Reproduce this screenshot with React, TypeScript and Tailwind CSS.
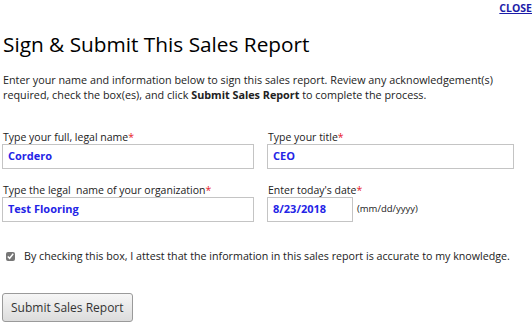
import React, { useState } from 'react'

// Sign & submit dialog body, sized for a 532x322 frame.

function Label({ text }: { text: string }) {
  return (
    <label className="block whitespace-pre text-[10.5px] leading-[13px] text-[#222] pl-[1px]">
      {text}
      <span className="text-[#e8202a]">*</span>
    </label>
  )
}

function Field({ value, width }: { value: string; width: string }) {
  return (
    <div
      className={`${width} h-[25px] border border-[#c4c4c4] bg-white flex items-center px-[5px] text-[11px] font-bold text-[#2424e6]`}
    >
      {value}
    </div>
  )
}

export default function App() {
  const [checked, setChecked] = useState(true)

  return (
    <div className="w-[532px] h-[322px] overflow-hidden bg-white font-['Open_Sans',sans-serif] text-[#222]">
      <div className="flex justify-end pt-[2px]">
        <a href="#" className="text-[10.5px] leading-[13px] font-bold text-[#1c1ca8] underline">
          CLOSE
        </a>
      </div>

      <h1 className="mt-[16px] pl-[3px] text-[20.8px] leading-[27px] font-normal text-black">
        Sign &amp; Submit This Sales Report
      </h1>

      <p className="mt-[14px] pl-[3px] text-[10.8px] leading-[15px] text-[#222] pr-[20px]">
        Enter your name and information below to sign this sales report. Review any acknowledgement(s)
        required, check the box(es), and click <span className="font-bold">Submit Sales Report</span> to complete the process.
      </p>

      <div className="mt-[29px] pl-[2px] grid grid-cols-[252px_247px] gap-x-[13px] gap-y-[15px]">
        <div className="flex flex-col">
          <Label text="Type your full, legal name" />
          <Field value="Cordero" width="w-[252px]" />
        </div>
        <div className="flex flex-col">
          <Label text="Type your title" />
          <Field value="CEO" width="w-[247px]" />
        </div>
        <div className="flex flex-col">
          <Label text="Type the legal  name of your organization" />
          <Field value="Test Flooring" width="w-[252px]" />
        </div>
        <div className="flex flex-col">
          <Label text="Enter today's date" />
          <div className="flex items-center gap-[4px]">
            <Field value="8/23/2018" width="w-[86px]" />
            <span className="text-[9.5px] text-[#222]">(mm/dd/yyyy)</span>
          </div>
        </div>
      </div>

      <label className="mt-[27px] pl-[6px] flex items-center gap-[9px] text-[10.7px] leading-[14px] text-[#222]">
        <input
          type="checkbox"
          checked={checked}
          onChange={e => setChecked(e.target.checked)}
          className="w-[9px] h-[9px] m-0 accent-[#777]"
        />
        By checking this box, I attest that the information in this sales report is accurate to my knowledge.
      </label>

      <div className="mt-[30px] pl-[2px]">
        <button className="h-[29px] px-[8px] rounded-[3px] border border-[#9a9a9a] bg-gradient-to-b from-[#f6f6f6] to-[#dcdcdc] text-[12px] text-[#333]">
          Submit Sales Report
        </button>
      </div>
    </div>
  )
}
